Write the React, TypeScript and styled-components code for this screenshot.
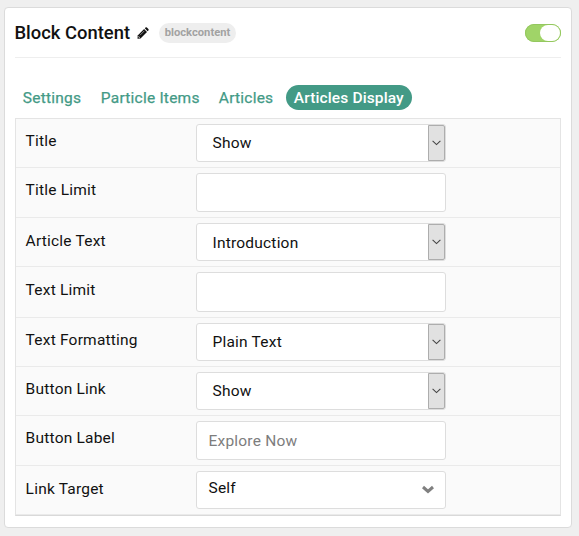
import React from 'react';
import styled, { createGlobalStyle } from 'styled-components';

const GlobalStyle = createGlobalStyle`
  * { box-sizing: border-box; }
  body {
    margin: 0;
    background: #efefef;
    font-family: Roboto, "Liberation Sans", sans-serif;
    font-size: 15.5px;
    letter-spacing: 0.21px;
    color: #111;
  }
`;

const Page = styled.main`
  width: 579px;
  height: 536px;
  padding: 7px 7px 8px 4px;
`;

const Card = styled.section`
  height: 521px;
  padding: 0 10px;
  background: #fff;
  border: 1px solid #dbdbdb;
  border-radius: 4px;
`;

const Header = styled.header`
  display: flex;
  align-items: center;
  height: 50px;
  border-bottom: 1px solid #eee;
  letter-spacing: 0;
`;

const Heading = styled.h1`
  margin: 0 0 0 -0.5px;
  width: 122.5px;
  font-size: 18.4px;
  line-height: 24px;
  font-weight: 500;
  white-space: nowrap;
`;

const Badge = styled.span`
  width: 77px;
  height: 20px;
  margin-left: 10px;
  border-radius: 10px;
  background: #eee;
  color: #a2a2a2;
  font-size: 11.2px;
  line-height: 19px;
  font-weight: 700;
  text-align: center;
`;

const Toggle = styled.button`
  display: flex;
  justify-content: flex-end;
  width: 36px;
  height: 18px;
  margin-left: auto;
  padding: 1px;
  border: 0;
  border-radius: 9px;
  background: #a0d468;
  box-shadow: inset 0 0 0 1px #94c75f;
`;

const Knob = styled.span`
  width: 20px;
  height: 16px;
  border-radius: 8px;
  background: #fff;
`;

const Tabs = styled.nav`
  display: flex;
  margin-top: 27px;
  height: 33px;
`;

const Tab = styled.a<{ $width: number; $active?: boolean }>`
  width: ${(p) => p.$width}px;
  height: 25px;
  padding-left: 7.8px;
  border-radius: 12.5px;
  line-height: 26px;
  letter-spacing: ${(p) => (p.$active ? 0.13 : 0.23)}px;
  font-weight: ${(p) => (p.$active ? 500 : 400)};
  -webkit-text-stroke: ${(p) => (p.$active ? '0' : '0.25px')};
  white-space: nowrap;
  color: ${(p) => (p.$active ? '#fff' : '#439a86')};
  background: ${(p) => (p.$active ? '#439a86' : 'transparent')};
`;

const Panel = styled.div`
  border: 1px solid #e4e4e4;
  border-bottom-color: #d9d9d9;
  background: #fafafa;
`;

const Row = styled.div<{ $height: number }>`
  display: flex;
  height: ${(p) => p.$height}px;
  padding: 5px 0 5px 9.6px;
  border-bottom: 1px solid #eaeaea;
`;

const Label = styled.label<{ $top: number }>`
  width: 170.4px;
  padding-top: ${(p) => p.$top}px;
  line-height: 20px;
`;

const Field = styled.div<{ $inset: number; $muted?: boolean }>`
  display: flex;
  align-items: center;
  justify-content: space-between;
  width: 250px;
  height: 100%;
  padding-left: ${(p) => p.$inset}px;
  border: 1px solid #ddd;
  border-radius: 3px;
  background: #fff;
  color: ${(p) => (p.$muted ? '#7d7d7d' : '#111')};
`;

const SelectField = styled.div`
  display: flex;
  width: 250px;
  height: 100%;
  border: 1px solid #ddd;
  border-radius: 3px;
  background: #fff;
`;

const SelectValue = styled.span<{ $top: number }>`
  flex: 1;
  padding: ${(p) => p.$top}px 0 0 15.5px;
  line-height: 20px;
`;

const SelectButton = styled.span`
  display: flex;
  align-items: center;
  justify-content: center;
  width: 17px;
  border: 1px solid #adadad;
  border-radius: 0 2px 2px 0;
  background: #e1e1e1;
`;

const Text = styled.span<{ $top: number }>`
  align-self: flex-start;
  padding-top: ${(p) => p.$top}px;
  line-height: 20px;
`;

const Pencil = () => (
  <svg width="12" height="12" viewBox="0 0 12 12" fill="#111">
    <path d="M7.1 2 10 4.9 3.5 11.4.5 11.7.7 8.4Z" />
    <path d="m7.8 1.3.7-.7q.7-.6 1.4 0l1.5 1.5q.6.7 0 1.4l-.8.7Z" />
    <path d="m1.5 9 1.6 1.6-.9.2-.8-.8Z" fill="#fff" />
    <path d="M3 8.2 7.3 3.9" stroke="#fff" strokeWidth=".5" />
  </svg>
);

const ThinChevron = () => (
  <svg width="9" height="6" viewBox="0 0 9 6" fill="none">
    <path d="m.6.9 3.9 3.7L8.4.9" stroke="#444" strokeWidth="1.1" />
  </svg>
);

const BoldChevron = () => (
  <svg width="14" height="9" viewBox="0 0 14 9" fill="none">
    <path d="m2 2 5 4.4L12 2" stroke="#808080" strokeWidth="3" />
  </svg>
);

const ChevronSlot = styled.span`
  display: flex;
  margin: 0 10px 1px 0;
`;

type RowData = {
  label: string;
  height: number;
  labelTop: number;
  kind: 'select' | 'input' | 'dropdown';
  value?: string;
  valueTop?: number;
};

const rows: RowData[] = [
  { label: 'Title', height: 49, labelTop: 7, kind: 'select', value: 'Show', valueTop: 8 },
  { label: 'Title Limit', height: 50, labelTop: 7, kind: 'input' },
  { label: 'Article Text', height: 49, labelTop: 8, kind: 'select', value: 'Introduction', valueTop: 9 },
  { label: 'Text Limit', height: 51, labelTop: 8, kind: 'input' },
  { label: 'Text Formatting', height: 49, labelTop: 7, kind: 'select', value: 'Plain Text', valueTop: 8 },
  { label: 'Button Link', height: 49, labelTop: 7, kind: 'select', value: 'Show', valueTop: 8 },
  { label: 'Button Label', height: 50, labelTop: 7, kind: 'input', value: 'Explore Now', valueTop: 9 },
  { label: 'Link Target', height: 49, labelTop: 8, kind: 'dropdown', value: 'Self', valueTop: 6 },
];

function Control({ row }: { row: RowData }) {
  if (row.kind === 'select') {
    return (
      <SelectField>
        <SelectValue $top={row.valueTop ?? 8}>{row.value}</SelectValue>
        <SelectButton><ThinChevron /></SelectButton>
      </SelectField>
    );
  }
  return (
    <Field $inset={11.5} $muted={row.kind === 'input'}>
      <Text $top={row.valueTop ?? 8}>{row.value}</Text>
      {row.kind === 'dropdown' && <ChevronSlot><BoldChevron /></ChevronSlot>}
    </Field>
  );
}

export default function App() {
  return (
    <Page>
      <GlobalStyle />
      <Card>
        <Header>
          <Heading>Block Content</Heading>
          <Pencil />
          <Badge>blockcontent</Badge>
          <Toggle aria-label="Enabled"><Knob /></Toggle>
        </Header>
        <Tabs>
          <Tab $width={78}>Settings</Tab>
          <Tab $width={118}>Particle Items</Tab>
          <Tab $width={75}>Articles</Tab>
          <Tab $width={126} $active>Articles Display</Tab>
        </Tabs>
        <Panel>
          {rows.map((row) => (
            <Row key={row.label} $height={row.height}>
              <Label $top={row.labelTop}>{row.label}</Label>
              <Control row={row} />
            </Row>
          ))}
        </Panel>
      </Card>
    </Page>
  );
}
